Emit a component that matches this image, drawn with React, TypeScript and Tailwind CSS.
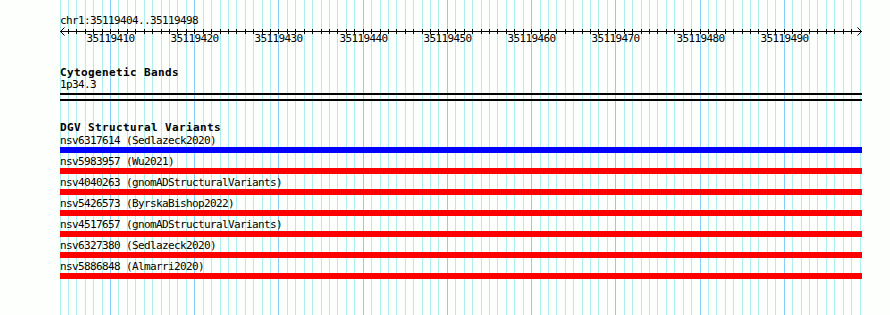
import React from "react";

const START = 35119404;
const BP = 96;
const X0 = 60;
const SPAN = 800;
const step = SPAN / (BP - 1);
const px = (i: number) => Math.floor(X0 + i * step) + 0.5;

const variants = [
  { id: "nsv6317614", src: "Sedlazeck2020", color: "bg-[#0000ff]" },
  { id: "nsv5983957", src: "Wu2021", color: "bg-[#ff0000]" },
  { id: "nsv4040263", src: "gnomADStructuralVariants", color: "bg-[#ff0000]" },
  { id: "nsv5426573", src: "ByrskaBishop2022", color: "bg-[#ff0000]" },
  { id: "nsv4517657", src: "gnomADStructuralVariants", color: "bg-[#ff0000]" },
  { id: "nsv6327380", src: "Sedlazeck2020", color: "bg-[#ff0000]" },
  { id: "nsv5886848", src: "Almarri2020", color: "bg-[#ff0000]" },
];

const GridAndRuler = () => {
  const ticks = Array.from({ length: BP }, (_, i) => i);
  return (
    <svg
      className="absolute inset-0"
      width={890}
      height={315}
      shapeRendering="crispEdges"
    >
      {ticks.map((i) => {
        const major = (START + i) % 10 === 0;
        return (
          <line
            key={"g" + i}
            x1={px(i)}
            x2={px(i)}
            y1={0}
            y2={315}
            stroke={major ? "#87cefa" : "#afeeee"}
            strokeWidth={1}
          />
        );
      })}
      {/* ruler */}
      <line x1={60} x2={862} y1={31.5} y2={31.5} stroke="#000" />
      {ticks.slice(1, -1).map((i) => (
        <line
          key={"t" + i}
          x1={px(i)}
          x2={px(i)}
          y1={29}
          y2={34}
          stroke="#000"
        />
      ))}
      <path d="M64.5 27.5 L60.5 31.5 L64.5 35.5" fill="none" stroke="#000" shapeRendering="auto" />
      <path d="M857.5 27.5 L861.5 31.5 L857.5 35.5" fill="none" stroke="#000" shapeRendering="auto" />
    </svg>
  );
};

const App = () => {
  const labels = Array.from({ length: BP }, (_, i) => i).filter(
    (i) => (START + i) % 10 === 0,
  );
  return (
    <div className="relative h-[315px] w-[890px] overflow-hidden bg-[#fdfffd] font-['DejaVu_Sans_Mono',monospace] text-[11px] leading-[12px] tracking-[-0.62px] text-black">
      <GridAndRuler />
      <div className="relative w-[862px] pl-[60px] pt-[15px]">
        <div className="h-[12px]">chr1:35119404..35119498</div>
        <div className="relative mt-[6px] h-[12px]">
          {labels.map((i) => (
            <span
              key={i}
              className="absolute top-0 -translate-x-1/2 whitespace-nowrap"
              style={{ left: px(i) - X0 }}
            >
              {START + i}
            </span>
          ))}
        </div>
        <div className="mt-[22px] h-[12px] font-bold tracking-[0.38px]">Cytogenetic Bands</div>
        <div className="h-[12px]">1p34.3</div>
        <div className="mt-[2px] h-[2px] bg-black" />
        <div className="mt-[4px] h-[2px] bg-black" />
        <div className="mt-[21px] h-[12px] font-bold tracking-[0.38px]">DGV Structural Variants</div>
        <div className="mt-[1px] flex flex-col gap-[3px]">
          {variants.map((v) => (
            <div key={v.id}>
              <div className="h-[12px] whitespace-pre">
                {v.id} ({v.src})
              </div>
              <div className={`h-[6px] ${v.color}`} />
            </div>
          ))}
        </div>
      </div>
    </div>
  );
};

export default App;
